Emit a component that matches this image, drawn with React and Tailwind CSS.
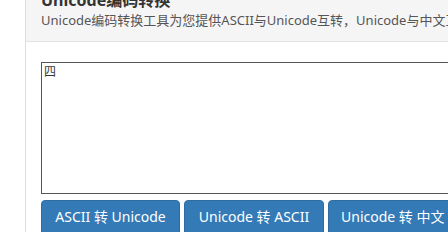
export default function App() {
  const font = { fontFamily: '"Noto Sans", "Noto Sans CJK SC", sans-serif' };
  return (
    <div className="w-[448px] h-[232px] overflow-hidden bg-white pl-[25px]" style={font}>
      <div className="border-l border-[#dddddd] h-full overflow-hidden">
        <div className="bg-[#f5f5f5] border-b border-[#e3e3e3] px-[15px] pb-[11px] -mt-[10px]">
          <div className="text-[16px] leading-[20px] font-bold text-[#333] whitespace-nowrap">Unicode编码转换</div>
          <div className="text-[13px] leading-[20px] text-[#555] whitespace-nowrap">Unicode编码转换工具为您提供ASCII与Unicode互转，Unicode与中文互转</div>
        </div>
        <div className="pl-[15px] pt-[20px]">
          <textarea
            className="block w-[420px] h-[132px] border border-[#555] p-[2px] text-[12px] leading-[14px] text-[#333] resize-none outline-none"
            style={font}
            defaultValue="四"
          />
          <div className="flex gap-[4px] mt-[6px] whitespace-nowrap">
            <button className="shrink-0 bg-[#337ab7] border border-[#2e6da4] rounded-[4px] px-[12px] pt-[6px] pb-[8px] text-[14px] leading-[20px] text-white w-[139px]">ASCII 转 Unicode</button>
            <button className="shrink-0 bg-[#337ab7] border border-[#2e6da4] rounded-[4px] px-[12px] pt-[6px] pb-[8px] text-[14px] leading-[20px] text-white w-[140px]">Unicode 转 ASCII</button>
            <button className="shrink-0 bg-[#337ab7] border border-[#2e6da4] rounded-[4px] px-[12px] pt-[6px] pb-[8px] text-[14px] leading-[20px] text-white">Unicode 转 中文</button>
          </div>
        </div>
      </div>
    </div>
  );
}
